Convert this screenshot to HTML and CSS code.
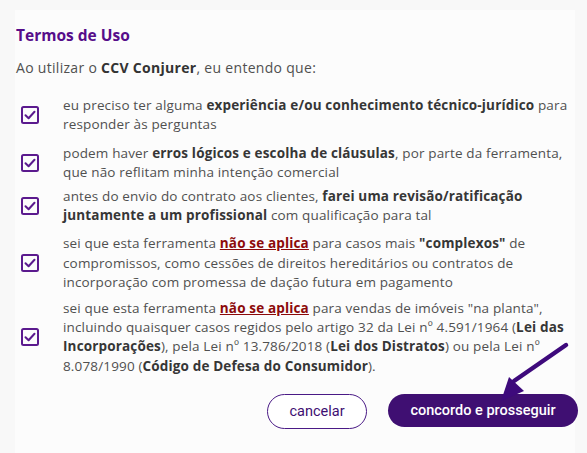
FILE: index.html
```
<!DOCTYPE html>
<html lang="pt-BR">
<head>
<meta charset="utf-8">
<title>Termos de Uso</title>
<link rel="stylesheet" href="styles.css">
</head>
<body>
<div class="panel">
  <h2 class="title">Termos de Uso</h2>
  <p class="intro">Ao utilizar o <b>CCV Conjurer</b>, eu entendo que:</p>
  <ul class="items">
    <li class="item item-1">
      <svg class="check" viewBox="0 0 18 18" width="18" height="18"><rect x="1" y="1" width="16" height="16" rx="1.5" fill="none" stroke="#5b1a8e" stroke-width="2"/><path d="M4.5 9.2 L7.6 12.2 L13.5 5.8" fill="none" stroke="#5b1a8e" stroke-width="2" stroke-linecap="round" stroke-linejoin="round"/></svg>
      <span class="text">eu preciso ter alguma <b>experiência e/ou conhecimento técnico-jurídico</b> para responder às perguntas</span>
    </li>
    <li class="item item-2">
      <svg class="check" viewBox="0 0 18 18" width="18" height="18"><rect x="1" y="1" width="16" height="16" rx="1.5" fill="none" stroke="#5b1a8e" stroke-width="2"/><path d="M4.5 9.2 L7.6 12.2 L13.5 5.8" fill="none" stroke="#5b1a8e" stroke-width="2" stroke-linecap="round" stroke-linejoin="round"/></svg>
      <span class="text">podem haver <b>erros lógicos e escolha de cláusulas</b>, por parte da ferramenta, que não reflitam minha intenção comercial</span>
    </li>
    <li class="item item-3">
      <svg class="check" viewBox="0 0 18 18" width="18" height="18"><rect x="1" y="1" width="16" height="16" rx="1.5" fill="none" stroke="#5b1a8e" stroke-width="2"/><path d="M4.5 9.2 L7.6 12.2 L13.5 5.8" fill="none" stroke="#5b1a8e" stroke-width="2" stroke-linecap="round" stroke-linejoin="round"/></svg>
      <span class="text">antes do envio do contrato aos clientes, <b>farei uma revisão/ratificação juntamente a um profissional</b> com qualificação para tal</span>
    </li>
    <li class="item">
      <svg class="check" viewBox="0 0 18 18" width="18" height="18"><rect x="1" y="1" width="16" height="16" rx="1.5" fill="none" stroke="#5b1a8e" stroke-width="2"/><path d="M4.5 9.2 L7.6 12.2 L13.5 5.8" fill="none" stroke="#5b1a8e" stroke-width="2" stroke-linecap="round" stroke-linejoin="round"/></svg>
      <span class="text">sei que esta ferramenta <a class="warn" href="#">não se aplica</a> para casos mais <b>"complexos"</b> de compromissos, como cessões de direitos hereditários ou contratos de incorporação com promessa de dação futura em pagamento</span>
    </li>
    <li class="item">
      <svg class="check" viewBox="0 0 18 18" width="18" height="18"><rect x="1" y="1" width="16" height="16" rx="1.5" fill="none" stroke="#5b1a8e" stroke-width="2"/><path d="M4.5 9.2 L7.6 12.2 L13.5 5.8" fill="none" stroke="#5b1a8e" stroke-width="2" stroke-linecap="round" stroke-linejoin="round"/></svg>
      <span class="text">sei que esta ferramenta <a class="warn" href="#">não se aplica</a> para vendas de imóveis "na planta", incluindo quaisquer casos regidos pelo artigo 32 da Lei nº 4.591/1964 (<b>Lei das Incorporações</b>), pela Lei nº 13.786/2018 (<b>Lei dos Distratos</b>) ou pela Lei nº 8.078/1990 (<b>Código de Defesa do Consumidor</b>).</span>
    </li>
  </ul>
  <div class="actions">
    <button class="btn btn-outline">cancelar</button>
    <button class="btn btn-solid">concordo e prosseguir</button>
  </div>
  <svg class="arrow" width="100" height="70" viewBox="0 0 100 70">
    <line x1="86" y1="4" x2="34" y2="40" stroke="#3e0a7c" stroke-width="4.5" stroke-linecap="round"/>
    <polygon points="21,60 29,36 44,50" fill="#3e0a7c"/>
  </svg>
</div>
</body>
</html>
```
FILE: styles.css
```
* { box-sizing: border-box; }
html, body { margin: 0; padding: 0; }
body {
  background: #f8f8f8;
  width: 587px;
  height: 453px;
  overflow: hidden;
  font-family: "Open Sans", "Noto Sans", sans-serif;
  color: #505050;
}
.panel {
  position: relative;
  margin: 10px 12px 0 15px;
  background: #fcfcfc;
  padding: 15px 0 30px 1px;
  height: 443px;
}
.title {
  margin: 0;
  font-size: 15.5px;
  line-height: 20px;
  font-weight: 700;
  color: #560d8a;
}
.intro {
  margin: 13px 0 0 0;
  font-size: 14px;
  letter-spacing: 0.3px;
  line-height: 20px;
}
.intro b { color: #333; }
.items {
  list-style: none;
  margin: 18px 0 0 0;
  padding: 0;
  display: flex;
  flex-direction: column;
  gap: 6.5px;
}
.item {
  display: flex;
  align-items: center;
  gap: 24px;
  padding-left: 5px;
}
.item-1 { margin-bottom: 3px; }
.item-2 { margin-bottom: -2px; }
.item-3 { margin-bottom: 2px; }
.check { flex: none; }
.text {
  font-size: 13.5px;
  letter-spacing: 0.15px;
  line-height: 19.3px;
  width: 512px;
}
.text b { color: #363636; }
.warn {
  color: #8c0a0a;
  font-weight: 700;
  text-decoration: underline;
}
.actions {
  display: flex;
  justify-content: flex-end;
  gap: 21px;
  margin-top: 18px;
  margin-right: -3px;
}
.btn {
  font-family: Roboto, "Liberation Sans", sans-serif;
  font-size: 14.5px;
  border-radius: 18px;
  cursor: pointer;
}
.btn-outline {
  width: 100px;
  height: 35px;
  background: #fff;
  border: 1px solid #4a1a86;
  color: #3e0f72;
}
.btn-solid {
  width: 190px;
  height: 33px;
  background: #3f0f72;
  border: none;
  color: #fff;
  font-weight: 500;
}
.arrow {
  position: absolute;
  left: 465px;
  top: 331px;
}
```
